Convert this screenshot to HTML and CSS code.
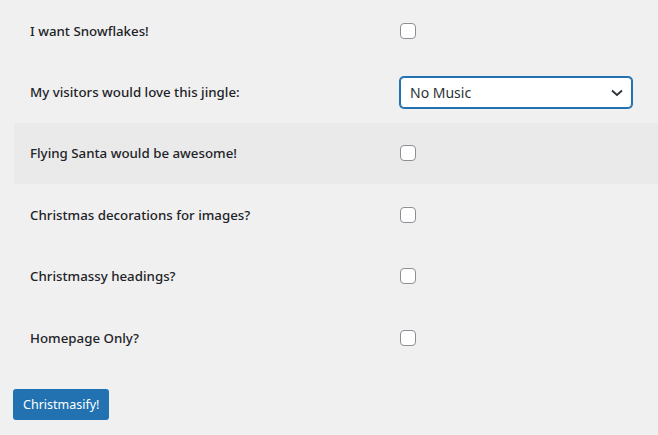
FILE: index.html
```html
<!DOCTYPE html>
<html lang="en">
<head>
    <meta charset="UTF-8">
    <meta name="viewport" content="width=device-width, initial-scale=1.0">
    <title>Christmasify</title>
    <link rel="stylesheet" href="styles.css">
</head>
<body>
    <form class="settings">
        <div class="form-table">
            <div class="row">
                <label class="row-label" for="snow">I want Snowflakes!</label>
                <div class="row-field"><input id="snow" type="checkbox"/></div>
            </div>
            <div class="row">
                <label class="row-label" for="music">My visitors would love this jingle:</label>
                <div class="row-field">
                    <span class="select-wrap">
                        <select id="music">
                            <option>No Music</option>
                        </select>
                        <svg class="chevron" width="12" height="8" viewBox="0 0 12 8">
                            <path d="M1 1.5 L6 6 L11 1.5" fill="none" stroke="#2c3338" stroke-width="1.8"/>
                        </svg>
                    </span>
                </div>
            </div>
            <div class="row highlight">
                <label class="row-label" for="santa">Flying Santa would be awesome!</label>
                <div class="row-field"><input id="santa" type="checkbox"/></div>
            </div>
            <div class="row">
                <label class="row-label" for="deco">Christmas decorations for images?</label>
                <div class="row-field"><input id="deco" type="checkbox"/></div>
            </div>
            <div class="row">
                <label class="row-label" for="headings">Christmassy headings?</label>
                <div class="row-field"><input id="headings" type="checkbox"/></div>
            </div>
            <div class="row">
                <label class="row-label" for="home">Homepage Only?</label>
                <div class="row-field"><input id="home" type="checkbox"/></div>
            </div>
        </div>
        <button type="submit" class="button-primary">Christmasify!</button>
    </form>
</body>
</html>
```

FILE: styles.css
```css
body {
    margin: 0;
    background-color: #f0f0f1;
    color: #1d2327;
    font-family: 'Noto Sans', 'Open Sans', sans-serif;
    font-size: 14px;
}

.settings {
    padding: 0 0 0 13px;
}

.form-table {
    margin-left: 1px;
}

.row {
    display: flex;
    align-items: center;
    height: 61.4px;
    padding-left: 16px;
}

.row.highlight {
    background-color: #eaeaeb;
}

.row-label {
    width: 370px;
    font-weight: 500;
    font-size: 13.3px;
    color: #1d2327;
}

.row-field {
    display: flex;
    align-items: center;
}

input[type="checkbox"] {
    appearance: none;
    margin: 0;
    width: 16px;
    height: 16px;
    border: 1px solid #8c8f94;
    border-radius: 4px;
    background: #fff;
}

.select-wrap {
    position: relative;
    display: inline-block;
}

select {
    appearance: none;
    width: 232px;
    height: 31px;
    padding: 0 24px 0 9px;
    border: 1px solid #2271b1;
    box-shadow: 0 0 0 1px #2271b1;
    border-radius: 4px;
    background: #fff;
    color: #2c3338;
    font-family: inherit;
    font-size: 14px;
    outline: none;
}

.chevron {
    position: absolute;
    right: 9px;
    top: 12px;
}

.button-primary {
    margin-top: 21px;
    height: 31px;
    padding: 0 10px;
    border: none;
    border-radius: 3px;
    background-color: #2271b1;
    color: #fff;
    font-family: inherit;
    font-size: 12.5px;
    cursor: pointer;
}
```
